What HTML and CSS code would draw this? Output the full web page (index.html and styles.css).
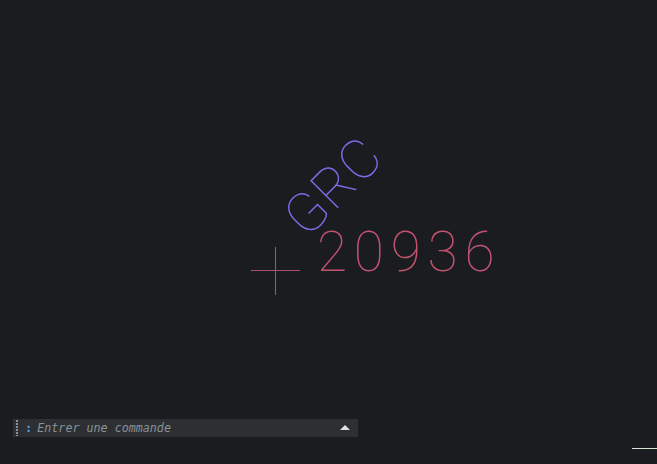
FILE: index.html
```html
<!DOCTYPE html>
<html lang="fr">
<head>
<meta charset="utf-8">
<title>Dessin</title>
<link rel="stylesheet" href="styles.css">
</head>
<body>
<main class="viewport">
  <svg class="drawing" width="657" height="464" viewBox="0 0 657 464" xmlns="http://www.w3.org/2000/svg">
    <g class="cross">
      <line x1="251" y1="270.5" x2="300" y2="270.5"/>
      <line x1="275.5" y1="247" x2="275.5" y2="295"/>
    </g>
    <text class="num" x="317" y="271">20936</text>
    <text class="label" x="335" y="211" transform="rotate(-45 335 211)" dx="-40">GRC</text>
    <line class="ucs" x1="632" y1="448.5" x2="657" y2="448.5"/>
  </svg>
  <div class="cmdline">
    <span class="grip"></span>
    <span class="prompt">:</span>
    <span class="placeholder">Entrer une commande</span>
    <span class="arrow"></span>
  </div>
</main>
</body>
</html>
```
FILE: styles.css
```css
html, body {
  margin: 0;
  padding: 0;
  background: #1b1c20;
  overflow: hidden;
}
.viewport {
  position: relative;
  width: 657px;
  height: 464px;
  background: #1b1c20;
}
.drawing {
  position: absolute;
  left: 0;
  top: 0;
}
.cross line {
  stroke: #b04f6a;
  stroke-width: 1;
}
.num {
  font-family: Roboto, "Liberation Sans", sans-serif;
  font-weight: 100;
  font-size: 55px;
  letter-spacing: 6.75px;
  fill: #c4536f;
}
.label {
  font-family: Roboto, "Liberation Sans", sans-serif;
  font-weight: 100;
  font-size: 55px;
  letter-spacing: 1px;
  fill: #7c6ae6;
}
.ucs {
  stroke: #d6e4d6;
  stroke-width: 1;
}
.cmdline {
  position: absolute;
  left: 13px;
  top: 419px;
  width: 345px;
  height: 18px;
  background: #2c3033;
  display: flex;
  align-items: center;
  box-sizing: border-box;
  padding-left: 3px;
}
.grip {
  width: 2px;
  height: 16px;
  background: repeating-linear-gradient(to bottom, #8c9096 0 2px, transparent 2px 3px);
  margin-right: 7px;
}
.prompt {
  font-family: "DejaVu Sans Mono", monospace;
  font-size: 12px;
  font-weight: bold;
  color: #4f9fe0;
  margin-right: 5px;
}
.placeholder {
  font-family: "DejaVu Sans Mono", monospace;
  font-style: italic;
  font-size: 11.7px;
  color: #8b9298;
  flex: 1;
}
.arrow {
  width: 0;
  height: 0;
  border-left: 5px solid transparent;
  border-right: 5px solid transparent;
  border-bottom: 5px solid #dfe2e4;
  margin-right: 8px;
  margin-bottom: 1px;
}
```
